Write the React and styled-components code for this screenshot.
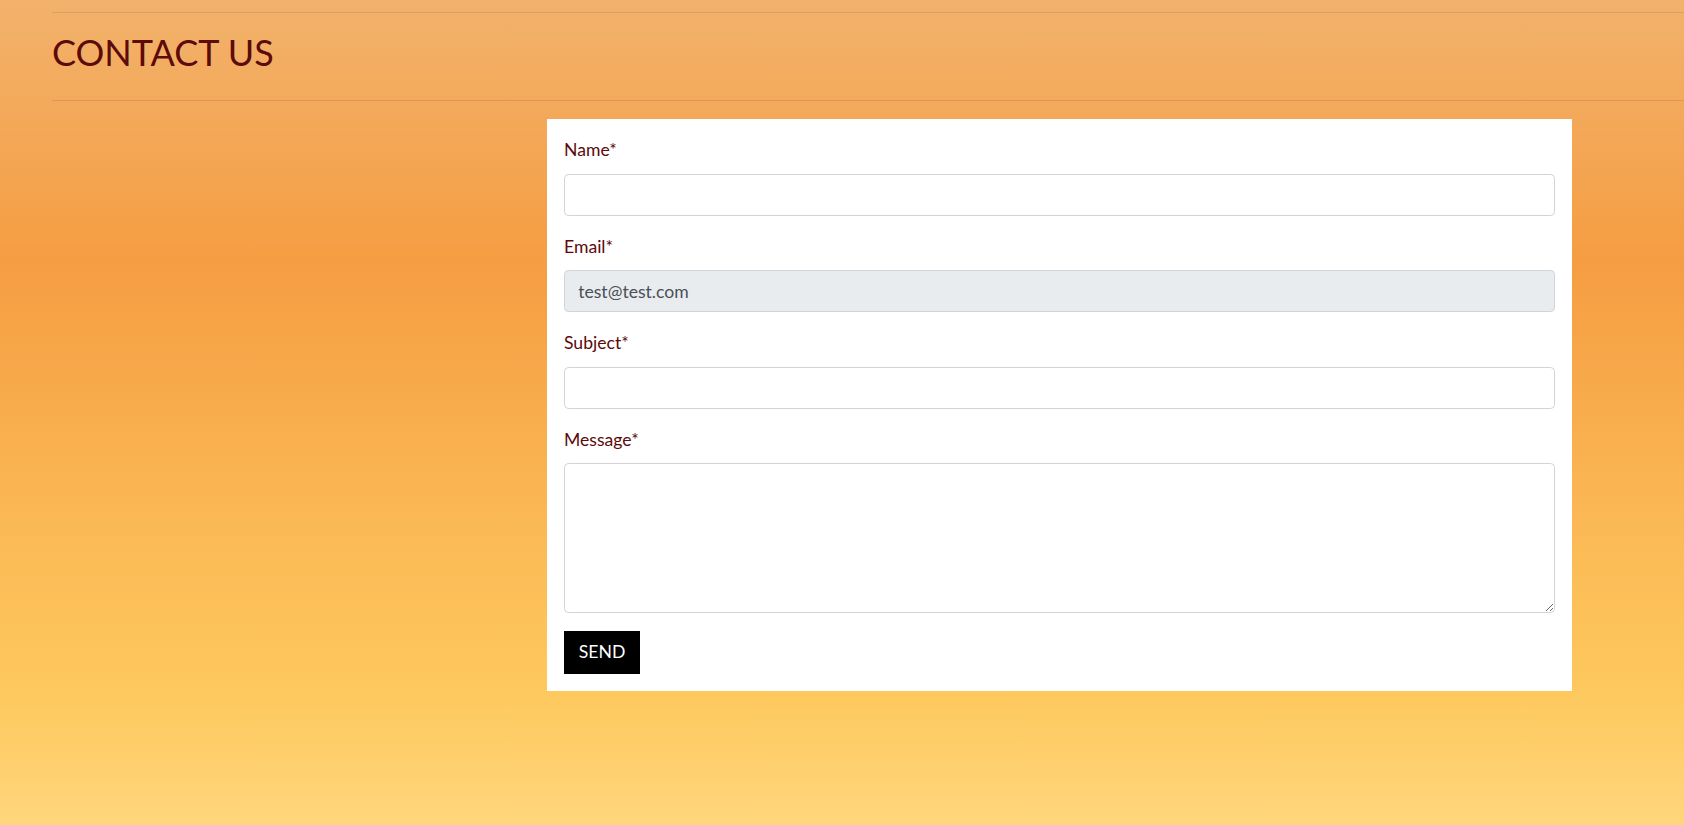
import React from "react";
import styled, { createGlobalStyle } from "styled-components";

const GlobalStyle = createGlobalStyle`
  html, body {
    margin: 0;
    padding: 0;
  }
  html { font-size: 17.6px; }
  body {
    font-family: Lato, "Open Sans", sans-serif;
    line-height: 1.5;
    color: #5c0a0a;
  }
  *, *::before, *::after { box-sizing: border-box; }
`;

const Page = styled.div`
  min-height: 100vh;
  padding-left: 52px;
  padding-top: 12px;
  background: linear-gradient(
    180deg,
    #f2b26c 0%,
    #f59d42 32%,
    #fbba55 65%,
    #fec95f 85%,
    #ffd67c 100%
  );
  overflow: hidden;
`;

const Rule = styled.hr`
  margin: 0;
  border: 0;
  border-top: 1px solid rgba(0, 0, 0, 0.1);
`;

const Title = styled.h1`
  margin: 0;
  height: 87px;
  display: flex;
  align-items: center;
  padding-bottom: 8px;
  font-size: 36px;
  font-weight: 400;
  line-height: 1.2;
  color: #5c0a0a;
  text-transform: uppercase;
`;

const Content = styled.div`
  display: grid;
  grid-template-columns: 495px 1025px 1fr;
  margin-top: 18px;
`;

const Card = styled.form`
  grid-column: 2;
  background: #fff;
  padding: 18.4px 17px 17px;
`;

const Group = styled.div`
  margin-bottom: 18px;
`;

const Label = styled.label`
  display: block;
  margin-bottom: 10px;
  font-size: 1rem;
  line-height: 1.5;
  color: #5c0a0a;
`;

const Input = styled.input`
  display: block;
  width: 100%;
  height: 42px;
  padding: 0.375rem 0.75rem;
  font-family: Lato, "Open Sans", sans-serif;
  font-size: 1rem;
  line-height: 1.5;
  color: #495057;
  background: ${(p) => (p.readOnly ? "#e9ecef" : "#fff")};
  border: 1px solid #ced4da;
  border-radius: 0.25rem;
  outline: none;
`;

const TextArea = styled.textarea`
  display: block;
  width: 100%;
  height: 150px;
  padding: 0.375rem 0.75rem;
  font-family: Lato, "Open Sans", sans-serif;
  font-size: 1rem;
  line-height: 1.5;
  color: #495057;
  background: #fff;
  border: 1px solid #ced4da;
  border-radius: 0.25rem;
  outline: none;
  resize: vertical;
`;

const SendButton = styled.button`
  display: block;
  height: 43px;
  padding: 0 13.8px;
  font-family: Lato, "Open Sans", sans-serif;
  font-size: 1rem;
  line-height: 1.5;
  color: #fff;
  background: #000;
  border: 1px solid #000;
  border-radius: 0;
  text-transform: uppercase;
  cursor: pointer;
`;

export default function App() {
  return (
    <>
      <GlobalStyle />
      <Page>
        <Rule />
        <Title>Contact Us</Title>
        <Rule />
        <Content>
          <Card onSubmit={(e) => e.preventDefault()}>
            <Group>
              <Label htmlFor="name">Name*</Label>
              <Input id="name" type="text" />
            </Group>
            <Group>
              <Label htmlFor="email">Email*</Label>
              <Input id="email" type="email" readOnly defaultValue="test@test.com" />
            </Group>
            <Group>
              <Label htmlFor="subject">Subject*</Label>
              <Input id="subject" type="text" />
            </Group>
            <Group>
              <Label htmlFor="message">Message*</Label>
              <TextArea id="message" />
            </Group>
            <SendButton type="submit">Send</SendButton>
          </Card>
        </Content>
      </Page>
    </>
  );
}
